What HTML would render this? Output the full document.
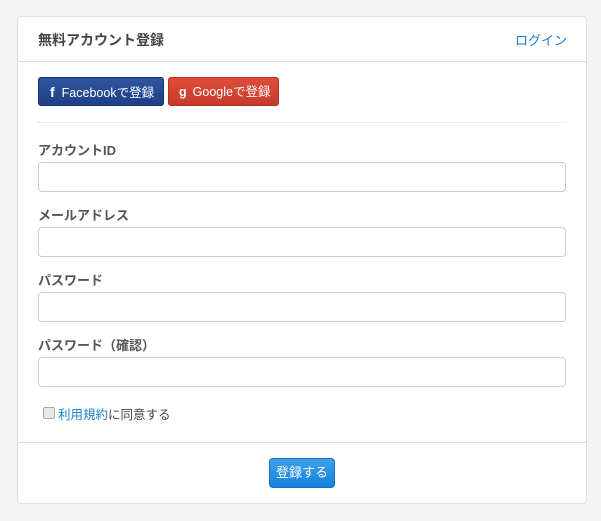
<!DOCTYPE html>
<html><head><meta charset="utf-8"><style>
body{margin:0;background:#f4f4f4;font-family:"Liberation Sans","Noto Sans CJK JP",sans-serif;font-size:13px;color:#444;}
.panel{position:absolute;left:17px;top:16px;width:568px;height:486px;background:#fff;border:1px solid #ddd;border-radius:4px;}
.hd{height:44px;border-bottom:1px solid #ddd;position:relative;}
.hd b{position:absolute;left:20px;top:13px;font-size:14px;color:#444;}
.hd a{position:absolute;right:19px;top:13px;color:#1a7fd0;font-size:13px;}
.btn{position:absolute;top:60px;height:29px;border-radius:3px;color:#fff;font-size:12.5px;line-height:29px;box-sizing:border-box;}
.fb{left:20px;width:126px;background:linear-gradient(#2f56a0,#1d3f86);border:1px solid #173471;}
.gg{left:150px;width:111px;background:linear-gradient(#e04c3a,#c73a2b);border:1px solid #b33224;}
.dot{position:absolute;left:20px;top:105px;width:528px;border-top:1px dotted #ddd;}
.lbl{position:absolute;left:20px;font-weight:bold;font-size:13px;color:#555;}
.inp{position:absolute;left:20px;width:528px;height:30px;box-sizing:border-box;border:1px solid #ccc;border-radius:4px;}
.ft{position:absolute;left:0;right:0;top:425px;border-top:1px solid #ddd;}
.sub{position:absolute;left:251px;top:441px;width:66px;height:30px;border-radius:4px;background:linear-gradient(#3ea2ec,#1580de);border:1px solid #1470c0;box-sizing:border-box;color:#fff;text-align:center;line-height:28px;font-size:13px;}
</style></head><body>
<div class="panel">
<div class="hd"><b>無料アカウント登録</b><a>ログイン</a></div>
<div class="btn fb"><span style="font-weight:bold;font-size:14px;margin:0 7px 0 11px">f</span>Facebookで登録</div>
<div class="btn gg"><span style="font-weight:bold;margin:0 6px 0 10px">g</span>Googleで登録</div>
<div class="dot"></div>
<div class="lbl" style="top:123px">アカウントID</div><div class="inp" style="top:145px"></div>
<div class="lbl" style="top:188px">メールアドレス</div><div class="inp" style="top:210px"></div>
<div class="lbl" style="top:253px">パスワード</div><div class="inp" style="top:275px"></div>
<div class="lbl" style="top:318px">パスワード（確認）</div><div class="inp" style="top:340px"></div>
<div style="position:absolute;left:25px;top:390px;width:10px;height:10px;border:1px solid #aaa;border-radius:2px;background:#e8e8e8"></div>
<div style="position:absolute;left:40px;top:387px;font-size:12.5px"><span style="color:#1a7fd0">利用規約</span>に同意する</div>
<div class="ft"></div>
<div class="sub">登録する</div>
</div>
</body></html>
